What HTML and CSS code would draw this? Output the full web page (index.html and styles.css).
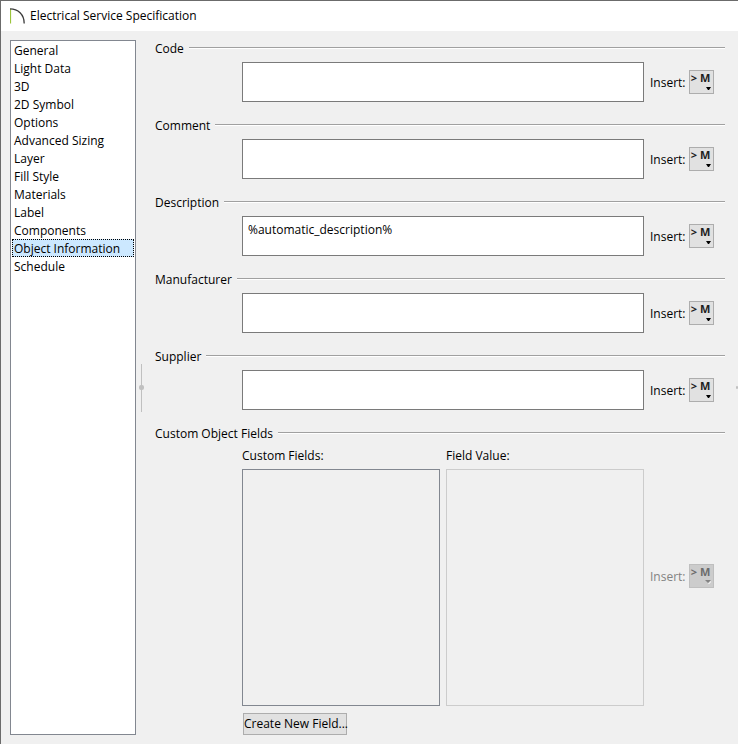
FILE: index.html
```
<!DOCTYPE html>
<html lang="en">
<head>
    <meta charset="UTF-8">
    <meta name="viewport" content="width=device-width, initial-scale=1.0">
    <title>Electrical Service Specification</title>
    <link rel="stylesheet" href="styles.css">
</head>
<body>
    <div class="dialog">
        <header class="titlebar">
            <svg class="logo" width="16" height="16" viewBox="0 0 16 16" fill="none">
                <path d="M0.5 1V15.5" stroke="#9bc43c" stroke-width="1.2"/>
                <path d="M0 0.9C8 0.9 14.2 6.5 14.2 15.5" stroke="#3c3c3c" stroke-width="1.3"/>
            </svg>
            <h1>Electrical Service Specification</h1>
        </header>

        <div class="content">
            <nav class="pages">
                <a href="#general">General</a>
                <a href="#light-data">Light Data</a>
                <a href="#3d">3D</a>
                <a href="#2d-symbol">2D Symbol</a>
                <a href="#options">Options</a>
                <a href="#advanced-sizing">Advanced Sizing</a>
                <a href="#layer">Layer</a>
                <a href="#fill-style">Fill Style</a>
                <a href="#materials">Materials</a>
                <a href="#label">Label</a>
                <a href="#components">Components</a>
                <a href="#object-information" class="selected" aria-current="page">Object Information</a>
                <a href="#schedule">Schedule</a>
            </nav>

            <div class="splitter"><span class="dot"></span></div>

            <main class="panel" id="object-information">
                <section>
                    <label class="heading" for="code">Code</label>
                    <div class="row">
                        <textarea id="code"></textarea>
                        <div class="insert">
                            <label for="insertCode">Insert:</label>
                            <button class="macro-btn" id="insertCode">&gt; M<svg class="arrow" width="5" height="3" viewBox="0 0 5 3"><path d="M0 0h5L3 3H2z"/></svg></button>
                        </div>
                    </div>
                </section>

                <section>
                    <label class="heading" for="comment">Comment</label>
                    <div class="row">
                        <textarea id="comment"></textarea>
                        <div class="insert">
                            <label for="insertComment">Insert:</label>
                            <button class="macro-btn" id="insertComment">&gt; M<svg class="arrow" width="5" height="3" viewBox="0 0 5 3"><path d="M0 0h5L3 3H2z"/></svg></button>
                        </div>
                    </div>
                </section>

                <section>
                    <label class="heading" for="description">Description</label>
                    <div class="row">
                        <textarea id="description" spellcheck="false">%automatic_description%</textarea>
                        <div class="insert">
                            <label for="insertDescription">Insert:</label>
                            <button class="macro-btn" id="insertDescription">&gt; M<svg class="arrow" width="5" height="3" viewBox="0 0 5 3"><path d="M0 0h5L3 3H2z"/></svg></button>
                        </div>
                    </div>
                </section>

                <section>
                    <label class="heading" for="manufacturer">Manufacturer</label>
                    <div class="row">
                        <textarea id="manufacturer"></textarea>
                        <div class="insert">
                            <label for="insertManufacturer">Insert:</label>
                            <button class="macro-btn" id="insertManufacturer">&gt; M<svg class="arrow" width="5" height="3" viewBox="0 0 5 3"><path d="M0 0h5L3 3H2z"/></svg></button>
                        </div>
                    </div>
                </section>

                <section>
                    <label class="heading" for="supplier">Supplier</label>
                    <div class="row">
                        <textarea id="supplier"></textarea>
                        <div class="insert">
                            <label for="insertSupplier">Insert:</label>
                            <button class="macro-btn" id="insertSupplier">&gt; M<svg class="arrow" width="5" height="3" viewBox="0 0 5 3"><path d="M0 0h5L3 3H2z"/></svg></button>
                        </div>
                    </div>
                </section>

                <section class="custom">
                    <h2 class="heading">Custom Object Fields</h2>
                    <div class="row">
                        <div class="column">
                            <label for="customFields">Custom Fields:</label>
                            <select id="customFields" size="8"></select>
                        </div>
                        <div class="column">
                            <label for="fieldValue">Field Value:</label>
                            <textarea id="fieldValue" disabled></textarea>
                        </div>
                        <div class="insert disabled">
                            <label for="insertValue">Insert:</label>
                            <button class="macro-btn" id="insertValue" disabled>&gt; M<svg class="arrow" width="6" height="4" viewBox="0 0 6 4"><path d="M3 4L6 1v1L4 4z" fill="#fff"/><path d="M0 0h6L3 3z"/></svg></button>
                        </div>
                    </div>
                    <button class="create-btn">Create New Field...</button>
                </section>
            </main>

            <div class="splitter edge"><span class="dot"></span></div>
        </div>
    </div>
</body>
</html>
```
FILE: styles.css
```
* {
    box-sizing: border-box;
}

body {
    margin: 0;
    background: #f0f0f0;
    color: #000;
    font-family: "Open Sans", "Noto Sans", sans-serif;
    font-size: 12px;
    line-height: 18px;
}

button,
select,
textarea {
    font: inherit;
    color: inherit;
    border-radius: 0;
}

.dialog {
    display: flex;
    flex-direction: column;
    min-height: 100vh;
    border-top: 1px solid #6b6b6b;
    border-left: 1px solid #6b6b6b;
}

/* Title bar */
.titlebar {
    display: flex;
    align-items: center;
    gap: 4px;
    height: 30px;
    padding-left: 9px;
    background: #fff;
}

.titlebar h1 {
    margin: 0;
    font-size: 12px;
    font-weight: normal;
}

.content {
    display: flex;
    flex: 1;
    padding-left: 9px;
}

/* Page list */
.pages {
    display: flex;
    flex-direction: column;
    width: 126px;
    margin: 9px 0;
    padding: 0 1px;
    background: #fff;
    border: 1px solid #828790;
}

.pages a {
    height: 18px;
    padding-left: 2px;
    color: #000;
    line-height: 20px;
    text-decoration: none;
    white-space: nowrap;
}

.pages .selected {
    background: #cce8ff;
    outline: 1px dotted #000;
    outline-offset: -1px;
}

/* Splitter handles */
.splitter {
    display: flex;
    align-items: center;
    justify-content: center;
    width: 11px;
}

.splitter:not(.edge) {
    background: linear-gradient(#c0c0c0, #c0c0c0) center / 1px 48px no-repeat;
}

.splitter.edge {
    justify-content: flex-end;
    width: 13px;
    overflow: hidden;
}

.dot {
    width: 5px;
    height: 5px;
    background: #c0c0c0;
    border-radius: 2px;
}

.edge .dot {
    width: 2px;
    height: 3px;
}

/* Object information */
.panel {
    display: flex;
    flex: 1;
    flex-direction: column;
    gap: 15px;
    padding: 9px 0 9px 8px;
}

.heading {
    display: flex;
    gap: 5px;
    margin: 0 0 4px;
    font-size: 12px;
    font-weight: normal;
}

.heading::after {
    content: '';
    flex: 1;
    height: 1px;
    margin-top: 7px;
    background: #a0a0a0;
    border-bottom: 1px solid #fff;
    background-clip: padding-box;
}

.row {
    display: flex;
    gap: 6px;
    margin-left: 87px;
    margin-right: 11px;
}

.row textarea {
    flex: 1;
    height: 40px;
    padding: 4px 5px;
    background: #fff;
    border: 1px solid #7a7a7a;
    resize: none;
}

.insert {
    display: flex;
    align-items: center;
    gap: 6px;
}

.insert label {
    width: 33px;
    padding-top: 2px;
}

.macro-btn {
    position: relative;
    width: 25px;
    height: 24px;
    padding: 0 2px 8px 0;
    background: #e1e1e1;
    border: 1px solid #adadad;
    color: #1e1e1e;
    font-size: 11px;
    font-weight: bold;
    line-height: 14px;
    white-space: nowrap;
}

.arrow {
    position: absolute;
    right: 2px;
    bottom: 3px;
}

.disabled {
    color: #838383;
}

.macro-btn:disabled {
    background: #cccccc;
    border-color: #bfbfbf;
    color: #6d6d6d;
}

.macro-btn:disabled .arrow {
    fill: #838383;
}

/* Custom fields */
.custom {
    display: flex;
    flex: 1;
    flex-direction: column;
}

.custom .row {
    flex: 1;
}

.column {
    display: flex;
    flex: 1;
    flex-direction: column;
    gap: 4px;
}

.column select {
    flex: 1;
    width: 100%;
    background: #f0f0f0;
    border: 1px solid #828790;
}

.column textarea {
    background: #f0f0f0;
    border-color: #cccccc;
}

.custom .insert {
    padding-bottom: 2px;
}

.create-btn {
    align-self: flex-start;
    width: 104px;
    height: 22px;
    margin: 7px 0 0 88px;
    padding: 0;
    background: #e1e1e1;
    border: 1px solid #adadad;
    white-space: nowrap;
}
```
